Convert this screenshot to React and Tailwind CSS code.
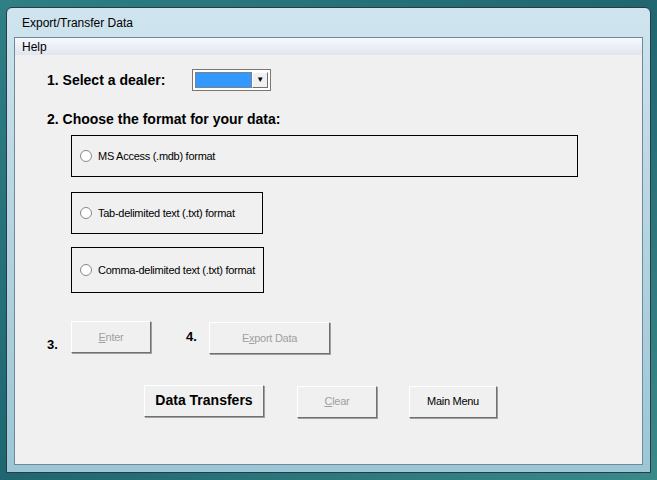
export default function App() {
  const btn = "flex items-center justify-center whitespace-nowrap bg-[#f0f0f0] border border-t-white border-l-white border-r-[#707070] border-b-[#707070] shadow-[1px_1px_0_#a0a0a0] text-[11px] tracking-tight";
  const radio = (label, w, h, mb) => (
    <div className={`border border-black flex items-center pl-[8px] ${w} ${h} ${mb}`}>
      <span className="w-[12px] h-[12px] rounded-full border border-[#888] bg-white mr-[6px] shrink-0" />
      <span className="text-[11px] tracking-tight whitespace-nowrap">{label}</span>
    </div>
  );
  return (
    <div className="w-[657px] h-[480px] bg-gradient-to-br from-[#2f7f85] via-[#1f6670] to-[#3a8a8a] relative overflow-hidden" style={{ fontFamily: "'Liberation Sans', Arial, sans-serif" }}>
      <div className="absolute left-[6px] top-[7px] w-[645px] h-[466px] rounded-t-[6px] border border-[#2a3b44] bg-gradient-to-b from-[#cfe4ee] via-[#b4d3e0] to-[#9cc6d6] flex flex-col px-[7px] pb-[7px]">
        <div className="h-[29px] flex items-center pl-[8px] text-[12px] text-black">Export/Transfer Data</div>
        <div className="flex-1 border border-[#6d8a99] bg-[#f0f0f0] flex flex-col">
          <div className="h-[17px] bg-gradient-to-b from-[#f6f8fc] to-[#e0e6ef] text-[12px] pl-[7px] flex items-center">Help</div>
          <div className="flex flex-col pl-[32px] pt-[14px] text-black">
            <div className="flex items-center h-[22px]">
              <span className="font-bold text-[14px] w-[145px]">1. Select a dealer:</span>
              <div className="w-[79px] h-[22px] border border-[#777] bg-white flex p-[2px]">
                <div className="flex-1 bg-[#3399ff] border border-dotted border-[#c07020]" />
                <div className={`${btn} w-[16px] shadow-none`}><span className="text-[8px]">▼</span></div>
              </div>
            </div>
            <div className="font-bold text-[14px] mt-[18px]">2. Choose the format for your data:</div>
            <div className="ml-[24px] mt-[5px] flex flex-col">
              {radio("MS Access (.mdb) format", "w-[507px]", "h-[42px]", "mb-[15px]")}
              {radio("Tab-delimited text (.txt) format", "w-[192px]", "h-[42px]", "mb-[13px]")}
              {radio("Comma-delimited text (.txt) format", "w-[193px]", "h-[46px]", "")}
            </div>
            <div className="flex items-start mt-[28px]">
              <span className="font-bold text-[13px] mt-[14px] w-[24px]">3.</span>
              <div className={`${btn} w-[80px] h-[32px] text-[#a0a0a0]`}><u>E</u>nter</div>
              <span className="font-bold text-[13px] mt-[6px] ml-[35px] w-[23px]">4.</span>
              <div className={`${btn} w-[121px] h-[32px] mt-[1px] text-[#a0a0a0]`}>E<u>x</u>port Data</div>
            </div>
            <div className="flex items-start mt-[30px] ml-[97px]">
              <div className={`${btn} w-[120px] h-[32px] font-bold !text-[14px] !tracking-normal`}>Data Transfers</div>
              <div className={`${btn} w-[80px] h-[32px] ml-[33px] mt-[1px] text-[#a0a0a0]`}><u>C</u>lear</div>
              <div className={`${btn} w-[88px] h-[32px] ml-[32px] mt-[1px]`}>Main Menu</div>
            </div>
          </div>
        </div>
      </div>
    </div>
  );
}
